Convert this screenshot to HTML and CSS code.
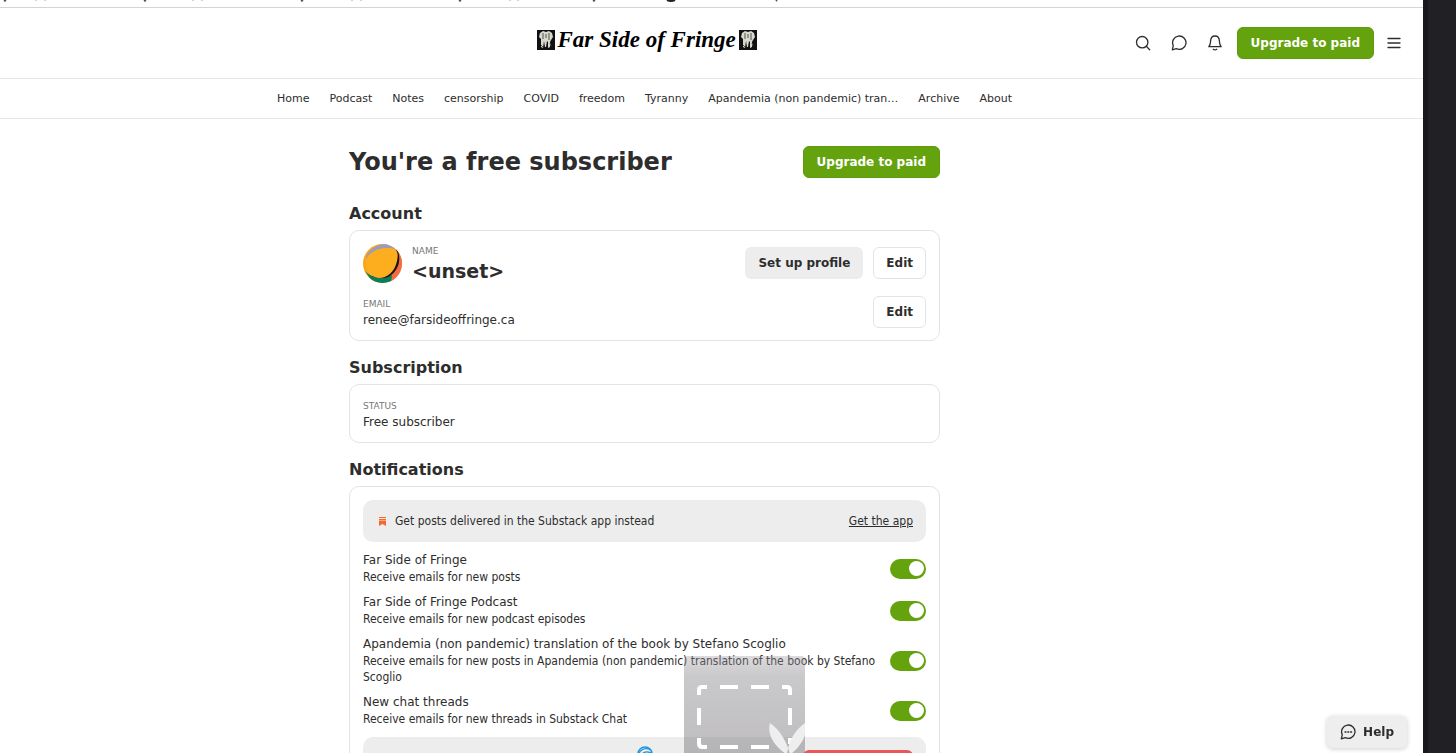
FILE: index.html
```
<!DOCTYPE html>
<html lang="en">
<head>
<meta charset="UTF-8">
<meta name="viewport" content="width=device-width, initial-scale=1.0">
<title>Far Side of Fringe</title>
<link rel="stylesheet" href="styles.css">
</head>
<body>

<div class="page">
  <div class="topbar">
    <svg width="780" height="7" viewBox="0 0 780 7" fill="none" stroke="#555" aria-hidden="true">
      <path d="M6 0l-2 1M146 0l-2 1M303 0l-2 1M461 0l-2 1M595 0l-2 1M777 0l-1 1" stroke-width="2"/>
      <path d="M36 0v1M45 0v1M193 0v1M202 0v1M352 0v1M361 0v1M510 0v1M518 0v1" stroke="#aaa"/>
      <path d="M667 0q4 2 8 0" stroke="#222" stroke-width="2"/>
    </svg>
  </div>

  <header class="header">
    <a class="logo" href="#">
      <svg class="skull" width="18" height="20" viewBox="0 0 18 20" aria-hidden="true">
        <path fill="#111" d="M0 0h18v20H0z"/>
        <path fill="#d8d8cc" d="M3 3l3-2 3 1 3-1 3 2 1 4-2 3-1 2v5l-2 1v-6l-1-1-1 6H8l-1-6-1 7-2-1V9L2 7z"/>
        <path stroke="#555" fill="none" d="M6 3v6M9 4v4M12 3v7M4 15l2 2M13 13l1 3"/>
      </svg>
      <span>Far Side of Fringe</span>
      <svg class="skull" width="18" height="20" viewBox="0 0 18 20" aria-hidden="true">
        <path fill="#111" d="M0 0h18v20H0z"/>
        <path fill="#d8d8cc" d="M3 3l3-2 3 1 3-1 3 2 1 4-2 3-1 2v5l-2 1v-6l-1-1-1 6H8l-1-6-1 7-2-1V9L2 7z"/>
        <path stroke="#555" fill="none" d="M6 3v6M9 4v4M12 3v7M4 15l2 2M13 13l1 3"/>
      </svg>
    </a>
    <div class="actions">
      <button class="icon-btn" aria-label="Search">
        <svg width="16" height="16" viewBox="0 0 16 16"><circle cx="7.2" cy="7.2" r="5.7"/><path d="M11.3 11.3l3.4 3.4"/></svg>
      </button>
      <button class="icon-btn" aria-label="Chat">
        <svg width="16" height="16" viewBox="0 0 16 16"><path d="M1.3 14.8l1-4.100a6.700 6.700 0 1 1 3 3z"/></svg>
      </button>
      <button class="icon-btn" aria-label="Notifications">
        <svg width="16" height="16" viewBox="0 0 16 16"><path d="M1.8 11.7c1.7-1.5 1.7-3.5 1.8-5.7C3.7 3 5.4 1 8 1s4.3 2 4.4 5c.1 2.2.1 4.2 1.8 5.7z"/><path d="M6.3 14.300q1.7 1.300 3.400 0"/></svg>
      </button>
      <button class="btn btn-primary">Upgrade to paid</button>
      <button class="icon-btn icon-menu" aria-label="Menu">
        <svg width="14" height="14" viewBox="0 0 14 14"><path d="M1 2.5h12M1 7h12M1 11.5h12"/></svg>
      </button>
    </div>
  </header>

  <nav class="nav">
    <a href="#">Home</a>
    <a href="#">Podcast</a>
    <a href="#">Notes</a>
    <a href="#">censorship</a>
    <a href="#">COVID</a>
    <a href="#">freedom</a>
    <a href="#">Tyranny</a>
    <a href="#">Apandemia (non pandemic) tran…</a>
    <a href="#">Archive</a>
    <a href="#">About</a>
  </nav>

  <main class="main">
    <div class="container">
      <div class="title-row">
        <h1>You're a free subscriber</h1>
        <button class="btn btn-primary">Upgrade to paid</button>
      </div>

      <h2>Account</h2>
      <section class="card">
        <div class="row">
          <svg class="avatar" width="39" height="39" viewBox="0 0 39 39" aria-hidden="true">
            <clipPath id="round"><circle cx="19.5" cy="19.5" r="19.5"/></clipPath>
            <g clip-path="url(#round)">
              <path fill="#f9a51e" d="M0 0h39v39H0z"/>
              <path fill="#9b9bbd" d="M3 13C7 4 15 0 24 0l11 6-7-1C17 3 8 7 3 15z"/>
              <path fill="#f26b43" d="M34 4l5 8v16l-10 11-3-4z"/>
              <path fill="#0c7d59" d="M2 27c5 6 14 8 27 4l-1 8H10z"/>
              <path fill="#1c120d" d="M34 4c3 7 3 14 0 20-2 4-5 7-9 9-5 2-12 1-17-1l10-1c9-3 17-13 15-27z"/>
              <path fill="#fcae1f" d="M3 15C7 8 16 4 25 4c9 0 11 4 9 13-2 10-9 17-18 17-9-1-14-7-13-19z"/>
            </g>
          </svg>
          <div class="info">
            <div class="label">Name</div>
            <div class="name">&lt;unset&gt;</div>
          </div>
          <button class="btn btn-grey">Set up profile</button>
          <button class="btn btn-outline">Edit</button>
        </div>
        <div class="row">
          <div class="info">
            <div class="label">Email</div>
            <div class="value">renee@farsideoffringe.ca</div>
          </div>
          <button class="btn btn-outline">Edit</button>
        </div>
      </section>

      <h2>Subscription</h2>
      <section class="card">
        <div class="row">
          <div class="info">
            <div class="label">Status</div>
            <div class="value">Free subscriber</div>
          </div>
        </div>
      </section>

      <h2>Notifications</h2>
      <section class="card card-list">
        <div class="banner">
          <svg width="11" height="11" viewBox="0 0 11 11" fill="#f8682c" aria-hidden="true"><path d="M2 1h7v1H2zM2 3h7v1.5H2zM2 5h7v5L5.500 8 2 10z"/></svg>
          <span>Get posts delivered in the Substack app instead</span>
          <a href="#">Get the app</a>
        </div>
        <div class="options">
          <label class="option">
            <span class="option-text">
              <span class="value">Far Side of Fringe</span>
              <span class="desc">Receive emails for new posts</span>
            </span>
            <input class="toggle" type="checkbox" checked>
          </label>
          <label class="option">
            <span class="option-text">
              <span class="value">Far Side of Fringe Podcast</span>
              <span class="desc">Receive emails for new podcast episodes</span>
            </span>
            <input class="toggle" type="checkbox" checked>
          </label>
          <label class="option">
            <span class="option-text">
              <span class="value">Apandemia (non pandemic) translation of the book by Stefano Scoglio</span>
              <span class="desc">Receive emails for new posts in Apandemia (non pandemic) translation of the book by Stefano Scoglio</span>
            </span>
            <input class="toggle" type="checkbox" checked>
          </label>
          <label class="option">
            <span class="option-text">
              <span class="value">New chat threads</span>
              <span class="desc">Receive emails for new threads in Substack Chat</span>
            </span>
            <input class="toggle" type="checkbox" checked>
          </label>
        </div>
        <div class="banner banner-alert">
          <svg width="16" height="42" viewBox="0 0 16 42" fill="none" stroke="#2196dc" stroke-width="1.5" aria-hidden="true">
            <circle cx="8" cy="9" r="7"/>
            <path d="M2 8c3-5 8-5 12-3M4 11c2-4 6-5 10-3M6 13c1-3 4-4 7-3"/>
          </svg>
          <button class="btn btn-danger" aria-label="Turn off"></button>
        </div>
      </section>
    </div>
  </main>
</div>

<div class="side"></div>

<svg class="snip" width="121" height="97" viewBox="0 0 121 97" aria-hidden="true">
  <defs>
    <linearGradient id="shade" x1="0" y1="0" x2="0" y2="1">
      <stop offset="0" stop-color="#98959a" stop-opacity=".35"/>
      <stop offset=".2" stop-color="#8b888d" stop-opacity=".46"/>
      <stop offset="1" stop-color="#7d7a80" stop-opacity=".5"/>
    </linearGradient>
  </defs>
  <path fill="url(#shade)" d="M4 0h113q4 0 4 4v94H0V4q0-4 4-4z"/>
  <path fill="none" stroke="#fff" stroke-width="4" d="M15 39V34q0-3 3-3h5M36 31h18M67 31h18M98 31h5q3 0 3 3v5M15 52v17M106 52v17M15 82v5q0 4 3 4h5M36 91h18M67 91h18M106 82v6"/>
  <path fill="#eee" d="M86 67c-3 11 3 22 16 31h4c-4-14-10-24-20-31zM121 67c3 11-3 22-14 31h-4c2-14 8-24 18-31z"/>
</svg>

<button class="help">
  <svg width="16" height="16" viewBox="0 0 16 16"><path d="M1.3 14.8l1-4.100a6.700 6.700 0 1 1 3 3z"/><path d="M5 8h1M7.800 8h1M10.600 8h1"/></svg>
  Help
</button>

</body>
</html>
```
FILE: styles.css
```
* {
  box-sizing: border-box;
}
body {
  margin: 0;
  display: flex;
  height: 100vh;
  overflow: hidden;
  background: #fff;
  color: #2d2d2d;
  font-family: "DejaVu Sans", Verdana, sans-serif;
  font-size: 12px;
  line-height: 16px;
}
.page {
  flex: 1;
  min-width: 0;
}
.side {
  width: 33px;
  background: #212025;
  border-left: 5px solid #19191d;
}

/* header */
.topbar {
  height: 8px;
  border-bottom: 1px solid #d4d4d4;
  overflow: hidden;
}
.topbar svg {
  display: block;
}
.header {
  display: flex;
  align-items: center;
  height: 71px;
  padding: 0 20px 0 calc(50% - 175px);
  border-bottom: 1px solid #e6e6e6;
}
.logo {
  display: flex;
  align-items: center;
  gap: 3px;
  padding-bottom: 6px;
  color: #000;
  font: italic bold 23px/32px "Liberation Serif", serif;
  text-decoration: none;
  white-space: nowrap;
}
.actions {
  display: flex;
  align-items: center;
  margin-left: auto;
}
.icon-btn {
  display: flex;
  padding: 0;
  margin-right: 20px;
  border: none;
  background: none;
  cursor: pointer;
}
.icon-btn svg,
.help svg {
  fill: none;
  stroke: #2d2d2d;
  stroke-width: 1.3;
  stroke-linecap: round;
  stroke-linejoin: round;
}
.actions .btn {
  margin-left: -6px;
  margin-right: 13px;
}
.icon-btn.icon-menu {
  margin-right: 2px;
}
.nav {
  display: flex;
  justify-content: center;
  align-items: center;
  gap: 20px;
  height: 40px;
  padding-right: 134px;
  border-bottom: 1px solid #e6e6e6;
  font-size: 11px;
  white-space: nowrap;
}
.nav a {
  color: #2d2d2d;
  text-decoration: none;
}

/* buttons */
.btn {
  height: 32px;
  padding: 0 12px;
  border: 1px solid transparent;
  border-radius: 6px;
  color: #2d2d2d;
  font: bold 12px/16px "DejaVu Sans", Verdana, sans-serif;
  white-space: nowrap;
  cursor: pointer;
}
.btn-primary {
  padding: 0 13px;
  border-color: #5f9c0c;
  background: #64a30d;
  color: #fff;
}
.btn-grey {
  background: #ededed;
}
.btn-outline {
  border-color: #e3e3e3;
  background: #fff;
}
.btn-danger {
  width: 110px;
  background: #e9575a;
}

/* content */
.main {
  padding: 27px 134px 0 0;
}
.container {
  max-width: 591px;
  margin: 0 auto;
}
.title-row {
  display: flex;
  justify-content: space-between;
  align-items: center;
  margin-bottom: 24px;
}
h1 {
  margin: 0;
  font-size: 24px;
  line-height: 32px;
}
h2 {
  margin: 15px 0 4px;
  font-size: 16px;
  line-height: 24px;
}
.card {
  display: flex;
  flex-direction: column;
  gap: 12px;
  padding: 12px 13px;
  border: 1px solid #e3e3e3;
  border-radius: 10px;
}
.card-list {
  display: block;
  padding: 13px;
}
.row {
  display: flex;
  align-items: center;
  gap: 10px;
  min-height: 33px;
}
.info {
  flex: 1;
}
.label {
  color: #777;
  font-size: 9px;
  text-transform: uppercase;
}
.name {
  font-size: 19px;
  font-weight: bold;
  line-height: 24px;
}
.banner {
  display: flex;
  align-items: center;
  gap: 7px;
  height: 42px;
  padding: 0 13px 0 14px;
  border-radius: 10px;
  background: #ededed;
  font: 12px/16px "DejaVu Sans Condensed", "DejaVu Sans", sans-serif;
}
.banner a {
  margin-left: auto;
  color: #2d2d2d;
}
.banner-alert {
  display: grid;
  grid-template-columns: 1fr auto 1fr;
  height: auto;
  padding: 8px 13px;
}
.banner-alert svg {
  grid-column: 2;
}
.banner-alert .btn {
  justify-self: end;
}
.options {
  display: flex;
  flex-direction: column;
  gap: 9px;
  padding: 10px 0;
}
.option {
  display: flex;
  align-items: center;
  gap: 8px;
}
.option-text {
  flex: 1;
}
.option .value {
  display: block;
  line-height: 17px;
}
.desc {
  display: block;
  font-family: "DejaVu Sans Condensed", "DejaVu Sans", sans-serif;
}
.toggle {
  appearance: none;
  display: flex;
  align-items: center;
  width: 36px;
  height: 20px;
  margin: 0;
  padding: 0 2px;
  border-radius: 10px;
  background: #ccc;
  cursor: pointer;
}
.toggle::before {
  content: "";
  width: 15px;
  height: 15px;
  border-radius: 50%;
  background: #fff;
}
.toggle:checked {
  justify-content: flex-end;
  background: #64a30d;
}

/* floating items */
.snip {
  position: absolute;
  left: 47%;
  bottom: 0;
}
.help {
  position: fixed;
  right: 49px;
  bottom: 5px;
  display: flex;
  align-items: center;
  gap: 7px;
  height: 32px;
  padding: 0 13px;
  border: none;
  border-radius: 6px;
  background: #eee;
  box-shadow: 0 1px 5px rgba(0, 0, 0, 0.2);
  color: #2d2d2d;
  font: bold 12px/16px "DejaVu Sans", Verdana, sans-serif;
  cursor: pointer;
}
```
